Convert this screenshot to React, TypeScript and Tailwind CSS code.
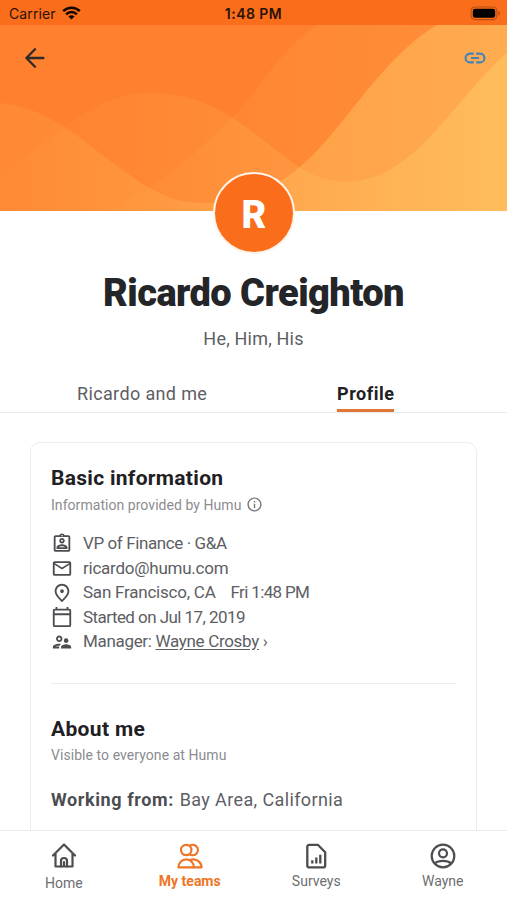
import React, { ReactNode } from "react";
import {
  MdInfoOutline,
  MdOutlineAssignmentInd,
  MdOutlineCalendarToday,
  MdOutlineMail,
  MdOutlinePlace,
  MdOutlineSupervisorAccount,
} from "react-icons/md";

interface InfoRowProps {
  icon: ReactNode;
  children: ReactNode;
  className?: string;
}

interface NavItemProps {
  label: string;
  icon: ReactNode;
  active?: boolean;
  className?: string;
}

const StatusBar = function () {
  return (
    <div className="grid grid-cols-3 items-center h-[25px] shrink-0 pl-[9px] pr-[6px] pt-[2px] bg-[#fa6d1b] text-[#2a1205]">
      <div className="flex items-center gap-[6px]">
        <span className="font-['Inter'] text-[14px] leading-5 tracking-[0.1px]">
          Carrier
        </span>
        <svg width="19" height="14" viewBox="0 0 19 14" className="-mt-[2px]">
          <g fill="none" stroke="#120600" strokeWidth="2.5">
            <path d="M1.2 5.2C5.8.6 13.2.6 17.8 5.2" />
            <path d="M4.1 8.3c3-3 7.8-3 10.8 0" />
          </g>
          <path d="M9.5 13.6 6.4 10.5c1.7-1.6 4.5-1.6 6.2 0z" fill="#120600" />
        </svg>
      </div>
      <span className="-ml-[3px] font-['Inter'] font-semibold text-[14px] leading-5 tracking-[0.45px] text-center whitespace-nowrap">
        1:48 PM
      </span>
      <svg
        width="31"
        height="15"
        viewBox="0 0 31 15"
        className="justify-self-end -mt-px"
      >
        <rect
          x="1"
          y="1"
          width="26"
          height="12.6"
          rx="4"
          fill="none"
          stroke="#b8500f"
          strokeWidth="1.2"
        />
        <rect x="2.8" y="2.8" width="22.4" height="9" rx="2.2" fill="#000" />
        <path d="M28.6 5v4.6c1.6-.6 1.6-4 0-4.6z" fill="#a8480f" />
      </svg>
    </div>
  );
};

const Waves = function () {
  return (
    <svg
      className="absolute inset-0 w-full h-full"
      viewBox="0 25 507 186"
      preserveAspectRatio="none"
    >
      <defs>
        <linearGradient id="back" gradientUnits="userSpaceOnUse" x1="100" x2="507" y1="0" y2="0">
          <stop offset="0" stopColor="#ffd670" stopOpacity="0.02" />
          <stop offset="0.35" stopColor="#ffd670" stopOpacity="0.08" />
          <stop offset="1" stopColor="#ffd670" stopOpacity="0.17" />
        </linearGradient>
        <linearGradient id="middle" gradientUnits="userSpaceOnUse" x1="0" x2="507" y1="0" y2="0">
          <stop offset="0" stopColor="#ffd670" stopOpacity="0.1" />
          <stop offset="0.4" stopColor="#ffd670" stopOpacity="0.2" />
          <stop offset="0.64" stopColor="#ffd670" stopOpacity="0.33" />
          <stop offset="1" stopColor="#ffd670" stopOpacity="0.4" />
        </linearGradient>
        <linearGradient id="front" gradientUnits="userSpaceOnUse" x1="0" x2="507" y1="0" y2="0">
          <stop offset="0" stopColor="#ffd670" stopOpacity="0.02" />
          <stop offset="0.3" stopColor="#ffd670" stopOpacity="0.09" />
          <stop offset="0.65" stopColor="#ffd670" stopOpacity="0.19" />
          <stop offset="1" stopColor="#ffd670" stopOpacity="0.4" />
        </linearGradient>
      </defs>
      <rect y="25" width="507" height="186" fill="#ff802e" />
      <path
        d="M105 211C150 192 190 160 233 117C262 86 280 51 316 25H507V211Z"
        fill="url(#back)"
      />
      <path
        d="M0 103C43 106 79 137 105 157C137 181 166 204 203 203C250 203 288 186 330 136C362 99 392 52 437 25H507V211H0Z"
        fill="url(#middle)"
      />
      <path
        d="M0 173C50 147 85 93 150 93C220 93 255 137 300 168C340 192 380 184 419 148C455 112 476 80 507 53V211H0Z"
        fill="url(#front)"
      />
    </svg>
  );
};

const BackIcon = function () {
  return (
    <svg width="20" height="20" viewBox="0 0 20 20" fill="none" stroke="#2e2a28" strokeWidth="2.3" strokeLinecap="round" strokeLinejoin="round">
      <path d="M10 1.2 1.4 10l8.6 8.8M1.4 10h17" />
    </svg>
  );
};

const LinkIcon = function () {
  return (
    <svg width="22" height="12" viewBox="0 0 22 12" fill="none" stroke="#3f84bd" strokeWidth="2.1">
      <path d="M9.8 1.600H5.900a4.400 4.400 0 0 0 0 8.800h3.900M12.200 1.600h3.900a4.400 4.400 0 0 1 0 8.800h-3.900M7 6h8" />
    </svg>
  );
};

const InfoRow = function ({ icon, children, className = "" }: InfoRowProps) {
  return (
    <li className={`flex items-center gap-[10px] h-[24.5px] ${className}`}>
      <span className="flex justify-center w-[22px] text-[#4c4d51]">{icon}</span>
      <span className="whitespace-nowrap">{children}</span>
    </li>
  );
};

const NavItem = function ({
  label,
  icon,
  active = false,
  className = "gap-[2.5px]",
}: NavItemProps) {
  return (
    <li
      className={`flex flex-col items-center w-[126.5px] pt-3 ${active ? "text-[#ee7426] font-bold" : "text-[#6d6e72]"} ${className}`}
    >
      {icon}
      <span className="text-[14px] leading-[18px] whitespace-nowrap">
        {label}
      </span>
    </li>
  );
};

const HomeIcon = function () {
  return (
    <svg width="26" height="26" viewBox="0 0 26 26" fill="none" stroke="#4c4d51" strokeWidth="2.2" strokeLinejoin="round" strokeLinecap="round">
      <path d="M2 12.5 13 1.5l11 11M4.500 10.500V23.500h17V10.500" />
      <path d="M10 23.500v-5.500a3 3 0 0 1 6 0v5.500M13 19v4" />
    </svg>
  );
};

const TeamsIcon = function () {
  return (
    <svg width="26" height="26" viewBox="0 0 26 26" fill="none" stroke="#ee7426" strokeWidth="2.2" strokeLinejoin="round">
      <circle cx="9.200" cy="7" r="5.200" />
      <path d="M12.500 2.900a5.200 5.200 0 1 1 0 8.200" />
      <path d="M1.400 24.300c0-3.800 3.200-8 7.800-8s7.800 4.200 7.800 8z" />
      <path d="M12.500 17.400c1.200-.8 2.400-1.100 4-1.100 4.600 0 8.100 4.200 8.100 8h-8" />
    </svg>
  );
};

const SurveysIcon = function () {
  return (
    <svg width="26" height="26" viewBox="0 0 26 26" fill="none" stroke="#4c4d51" strokeWidth="2.3" strokeLinejoin="round">
      <path d="M6.300 1.800h8.500l7.400 7.500v13.100a2 2 0 0 1-2 2H6.300a2 2 0 0 1-2-2V3.800a2 2 0 0 1 2-2z" />
      <path d="M9.300 20.600v-3.400M13.300 20.600v-6M17.300 20.600v-8.800" />
    </svg>
  );
};

const ProfileIcon = function () {
  return (
    <svg width="26" height="26" viewBox="0 0 26 26" fill="none" stroke="#4c4d51" strokeWidth="2.2">
      <circle cx="13" cy="13" r="11.300" />
      <circle cx="13" cy="10.300" r="4" />
      <path d="M5 20.500c3.500-3.400 12.500-3.400 16 0" />
    </svg>
  );
};

export default function App() {
  return (
    <div className="flex flex-col w-[507px] h-[900px] overflow-hidden bg-white font-['Roboto','Liberation_Sans',sans-serif] text-[#5d5e63]">
      <StatusBar />

      <main className="flex-1 min-h-0 overflow-hidden">
        <header className="relative h-[186px]">
          <Waves />
          <div className="relative flex justify-between items-center pl-[25px] pr-[21px] pt-[23px]">
            <BackIcon />
            <LinkIcon />
          </div>
          <div className="absolute left-[213px] top-[147px] flex justify-center items-center size-[82px] pt-[4px] rounded-full border-[2.5px] border-[#fff3ea] bg-[#fa6d1b] text-white font-black text-[38px]">
            R
          </div>
        </header>

        <section className="flex flex-col items-center pt-[60px]">
          <h1 className="text-[38px] leading-[44px] font-black tracking-[-0.55px] text-[#242528] whitespace-nowrap">
            Ricardo Creighton
          </h1>
          <p className="mt-3 text-[18px] leading-6 tracking-[0.2px]">
            He, Him, His
          </p>
        </section>

        <nav className="flex mt-[29px] h-[33px] border-b border-[#eaeaec] text-[18px] leading-7">
          <span className="ml-[77px] w-[130px] tracking-[0.36px] whitespace-nowrap">
            Ricardo and me
          </span>
          <span className="ml-[130px] w-[57px] h-[32px] border-b-[3px] border-[#df7635] font-bold tracking-[0.55px] text-[#1f2023] whitespace-nowrap">
            Profile
          </span>
        </nav>

        <article className="mx-[30px] mt-[29px] h-[460px] px-5 pt-[21px] rounded-[10px] border-[1.5px] border-[#ececee]">
          <h2 className="text-[21px] leading-7 font-bold tracking-[0.3px] text-[#1f2023]">
            Basic information
          </h2>
          <p className="flex items-center gap-[5px] h-[26px] text-[14px] tracking-[0.05px] text-[#8b8c90] whitespace-nowrap">
            Information provided by Humu
            <MdInfoOutline className="size-[17px] -mt-[2px] text-[#77787c]" />
          </p>
          <ul className="mt-[13.5px] text-[17px]">
            <InfoRow
              icon={<MdOutlineAssignmentInd className="size-[23px]" />}
              className="tracking-[-0.4px]"
            >
              VP of Finance · G&amp;A
            </InfoRow>
            <InfoRow
              icon={<MdOutlineMail className="size-[23px]" />}
              className="tracking-[-0.24px]"
            >
              ricardo@humu.com
            </InfoRow>
            <InfoRow
              icon={<MdOutlinePlace className="size-[22px]" />}
              className="tracking-[-0.22px]"
            >
              San Francisco, CA
              <span className="ml-[15px] tracking-[-0.65px]">Fri 1:48 PM</span>
            </InfoRow>
            <InfoRow
              icon={<MdOutlineCalendarToday className="size-[22px]" />}
              className="tracking-[-0.55px]"
            >
              Started on Jul 17, 2019
            </InfoRow>
            <InfoRow
              icon={<MdOutlineSupervisorAccount className="size-[22px]" />}
              className="tracking-[-0.32px]"
            >
              Manager:{" "}
              <a className="underline underline-offset-2">Wayne Crosby</a> ›
            </InfoRow>
          </ul>
          <hr className="mt-[28.5px] border-t-[1.5px] border-[#ececee]" />
          <h2 className="mt-[31px] text-[21px] leading-7 font-bold tracking-[0.35px] text-[#1f2023]">
            About me
          </h2>
          <p className="mt-[2px] text-[14px] leading-5 tracking-[0.06px] text-[#8b8c90]">
            Visible to everyone at Humu
          </p>
          <p className="mt-[23px] text-[18px] leading-6 tracking-[0.38px] whitespace-nowrap">
            <b className="mr-[1px] tracking-[0.6px] text-[#4c4d51]">
              Working from:
            </b>{" "}
            Bay Area, California
          </p>
        </article>
      </main>

      <footer className="h-[70px] shrink-0 border-t-[1.5px] border-[#ececee]">
        <ul className="flex">
          <NavItem label="Home" icon={<HomeIcon />} className="gap-[4.5px] pl-px" />
          <NavItem label="My teams" icon={<TeamsIcon />} active />
          <NavItem label="Surveys" icon={<SurveysIcon />} />
          <NavItem label="Wayne" icon={<ProfileIcon />} />
        </ul>
      </footer>
    </div>
  );
}
